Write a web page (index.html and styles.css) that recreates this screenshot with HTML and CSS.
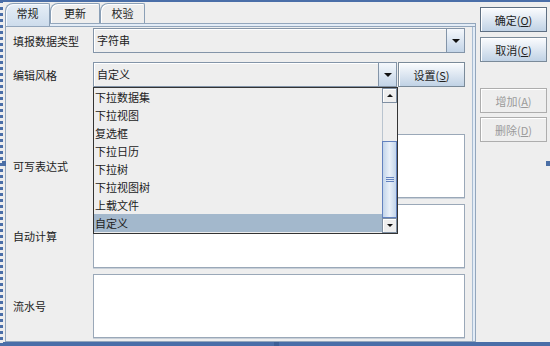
FILE: index.html
```html
<!DOCTYPE html>
<html lang="zh">
<head>
    <meta charset="UTF-8">
    <title>编辑风格</title>
    <link rel="stylesheet" href="styles.css">
</head>
<body>
    <div class="window">
        <div class="main">
            <div class="tabs">
                <div class="tab tab-active">常规</div>
                <div class="tab tab-mid">更新</div>
                <div class="tab">校验</div>
            </div>
            <div class="panel">
                <div class="form">
                    <div class="row row-combo">
                        <label>填报数据类型</label>
                        <div class="combo combo-wide">
                            <span class="combo-text">字符串</span>
                            <span class="combo-btn"><i class="tri-down"></i></span>
                        </div>
                    </div>
                    <div class="row row-combo row-style">
                        <label>编辑风格</label>
                        <div class="combo-wrap">
                            <div class="combo combo-short">
                                <span class="combo-text">自定义</span>
                                <span class="combo-btn"><i class="tri-down"></i></span>
                            </div>
                            <div class="popup">
                                <ul class="list">
                                    <li>下拉数据集</li>
                                    <li>下拉视图</li>
                                    <li>复选框</li>
                                    <li>下拉日历</li>
                                    <li>下拉树</li>
                                    <li>下拉视图树</li>
                                    <li>上载文件</li>
                                    <li class="sel">自定义</li>
                                </ul>
                                <div class="sb">
                                    <div class="sb-btn"><i class="tri-up small"></i></div>
                                    <div class="sb-track">
                                        <div class="sb-thumb"><span class="grip"></span></div>
                                    </div>
                                    <div class="sb-btn"><i class="tri-down small"></i></div>
                                </div>
                            </div>
                        </div>
                        <button class="btn btn-set">设置(<u>S</u>)</button>
                    </div>
                    <div class="row row-area row-first">
                        <label>可写表达式</label>
                        <div class="area"></div>
                    </div>
                    <div class="row row-area">
                        <label>自动计算</label>
                        <div class="area"></div>
                    </div>
                    <div class="row row-area">
                        <label>流水号</label>
                        <div class="area"></div>
                    </div>
                </div>
            </div>
        </div>

        <div class="side">
            <button class="btn btn-default">确定(<u>O</u>)</button>
            <button class="btn btn-cancel">取消(<u>C</u>)</button>
            <button class="btn btn-add" disabled>增加(<u>A</u>)</button>
            <button class="btn btn-del" disabled>删除(<u>D</u>)</button>
        </div>

        <span class="handle handle-left"></span>
        <span class="handle handle-right"></span>
        <span class="handle handle-bottom"></span>
    </div>
</body>
</html>
```

FILE: styles.css
```css
body {
    margin: 0;
    font-family: "Noto Sans CJK SC", "DejaVu Sans", sans-serif;
    font-size: 11px;
    color: #222;
    background-color: #eeeeee;
}

/* Outer frame */
.window {
    position: relative;
    display: flex;
    width: 550px;
    height: 346px;
    box-sizing: border-box;
    background-color: #eeeeee;
    border-top: 2px solid #4a6ea8;
    border-bottom: 4px solid #4a6ea8;
    border-left: 3px dotted #4a6ea8;
}

.main {
    display: flex;
    flex-direction: column;
    width: 471px;
    margin-left: 2px;
    padding-top: 1px;
}

/* Tabs */
.tabs {
    display: flex;
    height: 20px;
    position: relative;
    z-index: 1;
}

.tab {
    width: 45px;
    height: 20px;
    box-sizing: border-box;
    border: 1px solid #8a9fb6;
    border-bottom: none;
    border-radius: 8px 2px 0 0;
    background-color: #eeeeee;
    box-shadow: inset 1px 1px 0 #fff;
    text-align: center;
    line-height: 19px;
}

.tab-mid {
    width: 50px;
}

.tab-active {
    height: 23px;
    background: linear-gradient(#e6eef7, #cddcec);
    box-shadow: inset 1px 1px 0 #f7faff;
}

/* Tab content panel */
.panel {
    flex: 1;
    position: relative;
    border: 1px solid #93a6bc;
    box-shadow: inset 0 2px 0 #e3ecf6, inset 0 3px 0 #93a6bc, inset -2px 0 0 #e3ecf6, inset -3px 0 0 #a9bcd1;
}

.form {
    display: flex;
    flex-direction: column;
    padding: 4px 0 0 7px;
}

.row {
    display: flex;
    align-items: center;
}

.row label {
    width: 80px;
    flex: none;
}

.row-combo {
    height: 25px;
}

.row-style {
    margin-top: 9px;
}

.row-area {
    margin-top: 6px;
}

.row-first {
    margin-top: 47px;
}

/* Combo boxes */
.combo {
    display: flex;
    height: 25px;
    box-sizing: border-box;
    border: 1px solid #8394a8;
    background-color: #eeeeee;
    box-shadow: inset 1px 1px 0 #fff;
}

.combo-wide {
    width: 372px;
}

.combo-wrap {
    position: relative;
    width: 304px;
    margin-right: 1px;
}

.combo-short {
    width: 304px;
}

.combo-text {
    flex: 1;
    padding-left: 3px;
    line-height: 23px;
}

.combo-btn {
    display: flex;
    align-items: center;
    justify-content: center;
    width: 17px;
    border-left: 1px solid #8394a8;
    background: linear-gradient(#f5f8fc, #c3d4e7);
}

.tri-down {
    border-left: 4px solid transparent;
    border-right: 4px solid transparent;
    border-top: 4px solid #111;
}

.tri-up {
    border-left: 4px solid transparent;
    border-right: 4px solid transparent;
    border-bottom: 4px solid #111;
}

.small {
    border-left-width: 3px;
    border-right-width: 3px;
    border-top-width: 3px;
    border-bottom-width: 3px;
}

/* Dropdown popup */
.popup {
    position: absolute;
    top: 100%;
    left: 0;
    z-index: 2;
    display: flex;
    width: 305px;
    height: 147px;
    box-sizing: border-box;
    border: 1px solid #333;
    background-color: #eeeeee;
}

.list {
    flex: 1;
    margin: 0;
    padding: 0;
    list-style: none;
}

.list li {
    height: 18px;
    padding-left: 1px;
    line-height: 18px;
}

.list li.sel {
    background-color: #a3b8cc;
}

.sb {
    display: flex;
    flex-direction: column;
    width: 15px;
}

.sb-btn {
    display: flex;
    align-items: center;
    justify-content: center;
    height: 15px;
    box-sizing: border-box;
    border: 1px solid #7f8fa2;
    background-color: #eeeeee;
    box-shadow: inset 1px 1px 0 #fff;
}

.sb-track {
    flex: 1;
    padding-top: 38px;
    border-left: 1px solid #b9c4cf;
}

.sb-thumb {
    display: flex;
    align-items: center;
    justify-content: center;
    height: 77px;
    margin-left: -1px;
    box-sizing: border-box;
    border: 1px solid #6382bf;
    background: linear-gradient(to right, #c3d5ea, #e9f0f9 50%, #c3d5ea);
}

.grip {
    width: 8px;
    height: 5px;
    background: repeating-linear-gradient(#6382bf 0 1px, transparent 1px 2px);
}

/* Text areas */
.area {
    width: 372px;
    height: 64px;
    box-sizing: border-box;
    background-color: #fff;
    border: 1px solid #9aa8b8;
    box-shadow: 0 1px 0 #c8d0d9;
}

/* Buttons */
.btn {
    width: 67px;
    height: 25px;
    padding: 0;
    box-sizing: border-box;
    border: 1px solid #7a8a99;
    background: linear-gradient(#fbfcfe, #c0d2e5);
    box-shadow: inset 1px 1px 0 #fff;
    font: inherit;
    color: #222;
}

.btn u {
    text-underline-offset: 1px;
}

.btn-default {
    border-color: #5e6f82;
}

.btn:disabled {
    background: #eeeeee;
    border-color: #adadad;
    color: #9a9a9a;
}

.side {
    display: flex;
    flex-direction: column;
    width: 67px;
    margin-left: 4px;
    padding-top: 5px;
}

.btn-cancel {
    margin-top: 5px;
}

.btn-add {
    margin-top: 26px;
}

.btn-del {
    margin-top: 4px;
}

/* Selection handles */
.handle {
    position: absolute;
    width: 4px;
    height: 5px;
    background-color: #4a6ea5;
}

.handle-left {
    left: -1px;
    top: 159px;
}

.handle-right {
    right: 0;
    top: 159px;
}

.handle-bottom {
    left: 271px;
    bottom: -4px;
    width: 5px;
    height: 4px;
    background-color: #3c5f96;
}
```
